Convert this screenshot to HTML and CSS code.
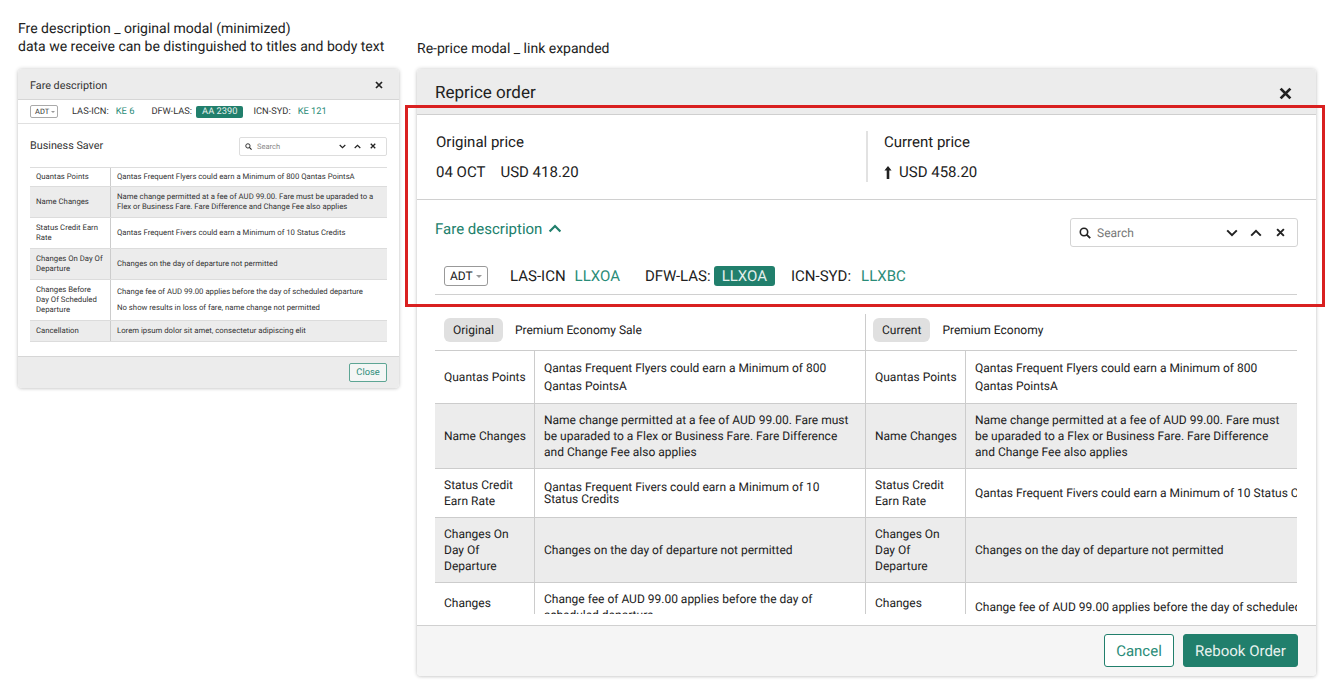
FILE: index.html
```html
<!DOCTYPE html>
<html lang="en">
<head>
<meta charset="utf-8">
<title>Reprice order</title>
<link rel="stylesheet" href="styles.css">
</head>
<body>
<svg class="defs" aria-hidden="true">
  <symbol id="i-x" viewBox="0 0 12 12"><path d="M1.5 1.5l9 9M10.5 1.5l-9 9" fill="none" stroke="currentColor" stroke-width="2.6"/></symbol>
  <symbol id="i-down" viewBox="0 0 12 8"><path d="M1.2 1.4L6 6.2l4.8-4.8" fill="none" stroke="currentColor" stroke-width="2"/></symbol>
  <symbol id="i-up" viewBox="0 0 12 8"><path d="M1.2 6.6L6 1.8l4.8 4.8" fill="none" stroke="currentColor" stroke-width="2"/></symbol>
  <symbol id="i-search" viewBox="0 0 12 12"><circle cx="5" cy="5" r="3.7" fill="none" stroke="currentColor" stroke-width="1.6"/><path d="M7.6 7.6l3.6 3.6" fill="none" stroke="currentColor" stroke-width="1.9"/></symbol>
  <symbol id="i-arrow" viewBox="0 0 8 13"><path d="M4 0L7.6 4.6H5.3V13H2.7V4.6H.4z" fill="currentColor"/></symbol>
</svg>

<main class="page">
  <section class="col col-small">
    <p class="note">Fre description _ original modal (minimized)<br>data we receive can be distinguished to titles and body text</p>
    <div class="modal">
      <header class="s-head">
        <span>Fare description</span>
        <svg class="s-close"><use href="#i-x"/></svg>
      </header>
      <div class="s-flights">
        <span class="s-adt">ADT<i class="caret"></i></span>
        <span class="s-f s-f1">LAS-ICN:</span><span class="s-code">KE 6</span>
        <span class="s-f s-f2">DFW-LAS:</span><span class="s-pill">AA 2390</span>
        <span class="s-f s-f3">ICN-SYD:</span><span class="s-code">KE 121</span>
      </div>
      <div class="s-body">
        <div class="s-title-row">
          <h2 class="s-title">Business Saver</h2>
          <div class="s-search">
            <svg class="s-ic-search"><use href="#i-search"/></svg>
            <span class="s-ph">Search</span>
            <svg class="s-ic-chev"><use href="#i-down"/></svg>
            <svg class="s-ic-chev"><use href="#i-up"/></svg>
            <svg class="s-ic-x"><use href="#i-x"/></svg>
          </div>
        </div>
        <div class="s-table">
          <div class="s-row s-h19"><div class="s-k">Quantas Points</div><div class="s-v">Qantas Frequent Flyers could earn a Minimum of 800 Qantas PointsA</div></div>
          <div class="s-row s-h31 shade"><div class="s-k">Name Changes</div><div class="s-v">Name change permitted at a fee of AUD 99.00. Fare must be uparaded to a Flex or Business Fare. Fare Difference and Change Fee also applies</div></div>
          <div class="s-row s-h31"><div class="s-k">Status Credit Earn Rate</div><div class="s-v">Qantas Frequent Fivers could earn a Minimum of 10 Status Credits</div></div>
          <div class="s-row s-h31 shade"><div class="s-k">Changes On Day Of Departure</div><div class="s-v">Changes on the day of departure not permitted</div></div>
          <div class="s-row s-h41"><div class="s-k">Changes Before Day Of Scheduled Departure</div><div class="s-v"><p class="s-p">Change fee of AUD 99.00 applies before the day of scheduled departure</p><p class="s-p">No show results in loss of fare, name change not permitted</p></div></div>
          <div class="s-row s-h21 shade"><div class="s-k">Cancellation</div><div class="s-v">Lorem ipsum dolor sit amet, consectetur adipiscing elit</div></div>
        </div>
      </div>
      <footer class="s-foot"><button class="s-btn">Close</button></footer>
    </div>
  </section>

  <section class="col col-large">
    <p class="note note-large">Re-price modal _ link expanded</p>
    <div class="modal">
      <header class="l-head">
        <h1 class="l-title">Reprice order</h1>
        <svg class="l-close"><use href="#i-x"/></svg>
      </header>
      <div class="prices">
        <div class="price price-orig">
          <div class="price-label">Original price</div>
          <div class="price-val"><span class="date">04 OCT</span><span>USD 418.20</span></div>
        </div>
        <div class="price price-cur">
          <div class="price-label">Current price</div>
          <div class="price-val"><svg class="up"><use href="#i-arrow"/></svg><span>USD 458.20</span></div>
        </div>
      </div>
      <div class="fare">
        <div class="fare-top">
          <a class="fare-link">Fare description<svg class="fare-chev"><use href="#i-up"/></svg></a>
          <div class="search">
            <svg class="ic-search"><use href="#i-search"/></svg>
            <span class="ph">Search</span>
            <svg class="ic-chev"><use href="#i-down"/></svg>
            <svg class="ic-chev"><use href="#i-up"/></svg>
            <svg class="ic-x"><use href="#i-x"/></svg>
          </div>
        </div>
        <div class="flights">
          <span class="adt">ADT<i class="caret caret-l"></i></span>
          <span class="f f1">LAS-ICN</span><span class="code c1">LLXOA</span>
          <span class="f f2">DFW-LAS:</span><span class="pill">LLXOA</span>
          <span class="f f3">ICN-SYD:</span><span class="code c3">LLXBC</span>
        </div>
      </div>
      <div class="compare">
        <div class="side">
          <div class="side-head"><span class="tag">Original</span><span>Premium Economy Sale</span></div>
          <div class="row h53"><div class="k">Quantas Points</div><div class="v lh18">Qantas Frequent Flyers could earn a Minimum of 800 Qantas PointsA</div></div>
          <div class="row h65 shade"><div class="k">Name Changes</div><div class="v">Name change permitted at a fee of AUD 99.00. Fare must be uparaded to a Flex or Business Fare. Fare Difference and Change Fee also applies</div></div>
          <div class="row h49"><div class="k">Status Credit Earn Rate</div><div class="v lh12">Qantas Frequent Fivers could earn a Minimum of 10 Status Credits</div></div>
          <div class="row h65 shade"><div class="k">Changes On Day Of Departure</div><div class="v">Changes on the day of departure not permitted</div></div>
          <div class="row last"><div class="k k-top">Changes</div><div class="v v-top">Change fee of AUD 99.00 applies before the day of scheduled departure</div></div>
        </div>
        <div class="side side-r">
          <div class="side-head"><span class="tag">Current</span><span>Premium Economy</span></div>
          <div class="row h53"><div class="k">Quantas Points</div><div class="v lh18">Qantas Frequent Flyers could earn a Minimum of 800 Qantas PointsA</div></div>
          <div class="row h65 shade"><div class="k">Name Changes</div><div class="v">Name change permitted at a fee of AUD 99.00. Fare must be uparaded to a Flex or Business Fare. Fare Difference and Change Fee also applies</div></div>
          <div class="row h49"><div class="k">Status Credit Earn Rate</div><div class="v nowrap">Qantas Frequent Fivers could earn a Minimum of 10 Status Credits</div></div>
          <div class="row h65 shade"><div class="k">Changes On Day Of Departure</div><div class="v">Changes on the day of departure not permitted</div></div>
          <div class="row last"><div class="k k-top">Changes</div><div class="v v-top2 nowrap">Change fee of AUD 99.00 applies before the day of scheduled departure</div></div>
        </div>
      </div>
      <footer class="l-foot">
        <button class="btn btn-ghost">Cancel</button>
        <button class="btn btn-solid">Rebook Order</button>
      </footer>
    </div>
  </section>
</main>
<div class="highlight"></div>
</body>
</html>
```

FILE: styles.css
```css
* { box-sizing: border-box; }
html, body { margin: 0; padding: 0; }
body {
  position: relative;
  width: 1333px;
  height: 695px;
  overflow: hidden;
  background: #fff;
  font-family: Roboto, "Liberation Sans", sans-serif;
  color: #212121;
  text-rendering: geometricPrecision;
}
.defs { position: absolute; width: 0; height: 0; }
svg { display: block; flex: none; }
h1, h2, p { margin: 0; font-weight: 400; }
button { font-family: inherit; cursor: pointer; text-rendering: geometricPrecision; }

.page { display: flex; gap: 18px; padding: 20px 0 0 18px; }
.col-small { width: 381px; }
.col-large { width: 899px; }
.note { height: 49px; font-size: 14px; line-height: 18px; color: #212121; }
.note-large { padding-top: 20px; }

.modal {
  background: #fff;
  border-radius: 4px;
  box-shadow: 0 0 4px rgba(0,0,0,.2), 0 1px 3px rgba(0,0,0,.08);
  overflow: hidden;
}

/* small modal */
.s-head {
  display: flex; align-items: center; justify-content: space-between;
  height: 31px; padding: 2px 16px 0 12px;
  background: #ececec; border-bottom: 1px solid #d6d6d6;
  font-size: 10.8px; color: #333;
}
.s-close { width: 8px; height: 8px; color: #222; }
.s-flights {
  display: flex; align-items: center;
  height: 24px; padding: 0 12px;
  border-bottom: 1px solid #e0e0e0;
  font-size: 9.3px; color: #333;
}
.s-adt {
  display: flex; align-items: center; gap: 2px;
  width: 28px; height: 13px; padding-left: 4px;
  border: 1px solid #aaa; border-radius: 2px;
  font-size: 7.5px;
}
.caret { display: block; width: 0; height: 0; border: 2px solid transparent; border-top: 2px solid #999; border-bottom: 0; }
.s-f1 { margin-left: 14px; }
.s-f2 { margin-left: 17px; }
.s-f3 { margin-left: 10px; }
.s-code { margin-left: 7px; color: #2a8c78; }
.s-pill {
  margin-left: 4px; padding: 0 6px; height: 12px; line-height: 12px;
  background: #217f6c; color: #e5f0ed; border-radius: 2px;
}
.s-body { padding: 12px 12px 14px; }
.s-title-row { display: flex; align-items: center; justify-content: space-between; height: 20px; margin-bottom: 11px; }
.s-title { font-size: 10.8px; color: #333; margin-top: -2px; }
.s-search {
  display: flex; align-items: center;
  width: 148px; height: 19px; padding: 0 10px 0 5px;
  border: 1px solid #ddd; border-radius: 2px;
}
.s-ic-search { width: 7px; height: 7px; color: #222; }
.s-ph { flex: 1; margin-left: 5px; font-size: 7.5px; color: #888; }
.s-ic-chev { width: 7px; height: 5px; margin-right: 8px; color: #222; }
.s-ic-x { width: 6px; height: 6px; margin-left: 1px; color: #222; }
.s-table { border-top: 1px solid #ddd; font-size: 7.75px; line-height: 10px; color: #333; }
.s-row { display: flex; border-bottom: 1px solid #dcdcdc; }
.s-h19 { height: 19px; }
.s-h31 { height: 31px; }
.s-h41 { height: 41px; }
.s-h21 { height: 21px; }
.shade { background: #ececec; }
.s-k { display: flex; align-items: center; width: 81px; padding: 0 5px 0 6px; border-right: 1px solid #ccc; }
.s-v { flex: 1; display: flex; flex-direction: column; justify-content: center; padding: 0 6px; }
.s-p + .s-p { margin-top: 6px; }
.s-foot {
  display: flex; justify-content: flex-end; align-items: center;
  height: 32px; padding: 0 12px;
  background: #ececec; border-top: 1px solid #d6d6d6;
}
.s-btn {
  width: 38px; height: 19px; padding: 0;
  background: #f4f6f5; border: 1px solid #5da594; border-radius: 2px;
  color: #2a8c78; font-size: 9.3px;
}

/* large modal */
.l-head {
  display: flex; align-items: center; justify-content: space-between;
  height: 46px; padding: 3px 24px 0 18px;
  background: #ececec; border-bottom: 1px solid #cfcfcf;
}
.l-title { font-size: 17px; color: #212121; }
.l-close { width: 13px; height: 13px; color: #212121; }
.prices { display: flex; height: 85px; padding-top: 16px; border-bottom: 1px solid #d0d0d0; }
.price { height: 51px; font-size: 15px; color: #212121; }
.price-orig { width: 449px; padding-left: 19px; }
.price-cur { flex: 1; padding-left: 16px; border-left: 2px solid #e2e2e2; }
.price-label { height: 20px; line-height: 20px; margin-top: 1px; margin-bottom: 10px; }
.price-val { display: flex; align-items: center; height: 20px; }
.date { margin-right: 15px; }
.up { width: 8px; height: 13px; margin-right: 7px; color: #212121; }
.fare { margin: 0 19px 0 18px; height: 95px; border-bottom: 1px solid #d0d0d0; }
.fare-top { display: flex; justify-content: space-between; align-items: flex-start; padding-top: 18px; height: 66px; }
.fare-link { display: flex; align-items: center; gap: 6px; height: 21px; font-size: 15px; color: #217f6c; }
.fare-chev { width: 14px; height: 9px; color: #217f6c; }
.search {
  display: flex; align-items: center;
  width: 228px; height: 29px; padding: 0 12px 0 8px; margin-right: -1px;
  border: 1px solid #d4d4d4; border-radius: 3px; background: #fff;
}
.ic-search { width: 12px; height: 12px; color: #222; }
.ph { flex: 1; margin-left: 6px; padding-top: 1px; font-size: 12px; color: #777; }
.ic-chev { width: 12px; height: 8px; margin-right: 12px; color: #222; }
.ic-x { width: 9px; height: 9px; margin-left: 2px; color: #222; }
.flights { display: flex; align-items: center; height: 20px; padding-left: 9px; font-size: 15px; color: #212121; }
.adt {
  display: flex; align-items: center; gap: 3px;
  width: 44px; height: 20px; padding-left: 5px;
  border: 1px solid #999; border-radius: 3px; font-size: 12px;
}
.caret-l { border-width: 3px; border-top-width: 3px; border-bottom: 0; }
.f1 { margin-left: 22px; }
.f2 { margin-left: 25px; }
.f3 { margin-left: 16px; }
.code { color: #2a8c78; }
.c1 { margin-left: 9px; }
.c3 { margin-left: 10px; }
.pill {
  margin-left: 3px; padding: 0 8px; height: 20px; line-height: 20px;
  background: #217f6c; color: #e5f0ed; border-radius: 3px;
}
.compare {
  display: flex; margin: 19px 19px 11px 18px;
  height: 300px; overflow: hidden;
  font-size: 12px; line-height: 16px; color: #212121;
}
.side { width: 430px; flex: none; }
.side-r { flex: 1; width: auto; min-width: 0; border-left: 1px solid #ccc; }
.side-head { display: flex; align-items: flex-start; gap: 12px; height: 37px; padding: 4px 0 0 9px; border-bottom: 1px solid #ccc; line-height: 24px; }
.side-r .side-head { padding-left: 7px; }
.tag { display: block; padding: 0 9px; height: 24px; background: #e0e0e0; border-radius: 6px; }
.row { display: flex; border-bottom: 1px solid #ccc; }
.h53 { height: 53px; }
.h65 { height: 65px; }
.h49 { height: 49px; }
.last { height: 60px; border-bottom: 0; }
.k { display: flex; align-items: center; width: 100px; flex: none; padding: 0 8px 0 9px; border-right: 1px solid #ccc; }
.v { flex: 1; min-width: 0; display: flex; align-items: center; padding: 0 9px; }
.lh18 { line-height: 18px; }
.lh12 { line-height: 12px; }
.nowrap { white-space: nowrap; overflow: hidden; padding-right: 0; }
.k-top { align-items: flex-start; padding-top: 12px; }
.v-top { align-items: flex-start; padding-top: 8px; }
.v-top2 { align-items: flex-start; padding-top: 16px; }
.l-foot {
  display: flex; justify-content: flex-end; gap: 9px;
  height: 51px; padding: 8px 18px 0 0;
  background: #f5f5f5; border-top: 1px solid #d0d0d0;
}
.btn { height: 33px; padding: 0; border-radius: 3px; font-size: 15px; }
.btn-ghost { width: 70px; background: #fff; border: 1px solid #217f6c; color: #2a8c78; }
.btn-solid { width: 115px; background: #217f6c; border: 1px solid #217f6c; color: #e8f2ef; }

.highlight {
  position: absolute; left: 405px; top: 105px;
  width: 920px; height: 202px;
  border: 3px solid #d92020;
  pointer-events: none;
}
```
